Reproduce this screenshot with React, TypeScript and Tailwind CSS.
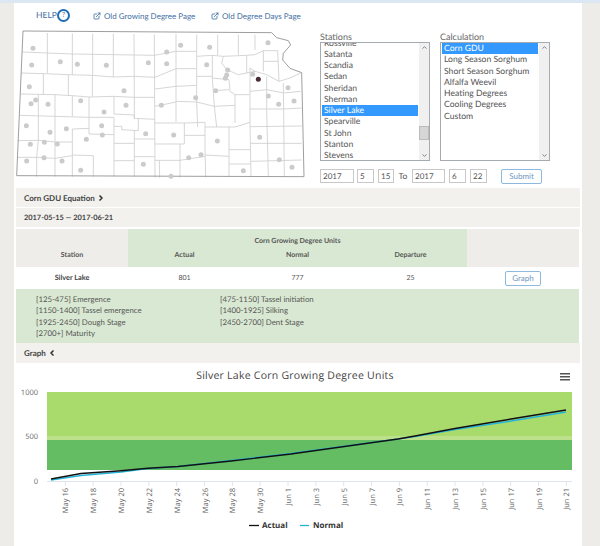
import React from "react";
import { ExternalLink, ChevronRight, ChevronLeft, ChevronUp, ChevronDown } from "lucide-react";

const outline = "M69,93 L815,98 L830,113 L865,122 L872,135 L850,160 L848,180 L870,205 L905,218 L912,530 L50,527 Z";
const lines = [
  "M142,99 L142,219","M217,100 L217,162","M278,101 L278,226","M340,101 L340,231","M402,102 L403,294","M463,103 L465,532",
  "M67,156 L142,159 L217,162 L340,164 L463,166 L528,154 L590,154 L590,169 L637,166 L670,169 L740,166 L765,164 L790,152 L835,152",
  "M65,219 L130,221 L205,224 L277,226 L340,231 L402,229 L465,232 L528,206 L590,206",
  "M130,221 L130,284","M205,224 L205,287","M277,226 L277,289","M217,162 L217,224",
  "M62,282 L165,284 L217,287 L267,291 L340,289 L403,292 L463,292",
  "M115,284 L115,346 L115,421 L110,472 L110,530","M165,284 L165,475 L165,530","M217,287 L217,349","M267,291 L267,402","M342,289 L342,342","M403,292 L403,356",
  "M60,346 L165,349 L267,352 L342,352","M342,342 L403,345 L403,355 L465,358","M342,352 L342,530","M342,379 L365,379 L365,389 L415,392 L415,355",
  "M217,387 L267,385","M217,387 L217,530","M267,402 L342,404","M217,465 L280,467 L280,530",
  "M342,430 L403,430","M403,417 L465,417","M403,392 L403,530","M53,422 L115,421 L165,426 L217,426","M52,472 L110,472 L165,475 L217,467",
  "M342,482 L402,482","M403,470 L465,470",
  "M528,102 L528,366","M590,104 L590,154","M653,104 L653,165","M715,104 L715,165","M765,104 L765,150",
  "M637,166 L637,234 L643,319 L650,381","M670,169 L665,189 L680,209 L715,224 L740,219 L765,214 L800,224 L837,244 L870,234 L902,219",
  "M740,166 L740,219","M790,152 L790,214","M833,154 L837,244","M790,184 L835,184",
  "M590,169 L590,304 L593,381","M590,229 L637,229","M637,234 L687,239 L690,274 L705,284 L748,284","M643,272 L687,269","M705,284 L705,369","M642,319 L705,316",
  "M528,259 L590,256","M528,304 L590,306 L643,319","M465,319 L528,306","M465,267 L528,259",
  "M465,369 L555,369 L615,367","M553,369 L553,432","M615,367 L615,444 L617,532","M615,381 L705,381 L750,367","M687,381 L687,530","M553,406 L615,406","M465,432 L553,432",
  "M540,432 L540,532","M615,465 L687,469","M687,449 L750,449","M687,492 L753,492","M478,481 L479,533","M465,481 L540,481 L615,469",
  "M750,204 L750,367 L753,530","M750,204 L765,214","M800,229 L800,327 L805,530","M850,249 L853,530",
  "M750,274 L800,269 L850,279 L902,274","M750,327 L850,327 L905,324","M750,380 L905,378","M753,430 L905,430","M753,484 L905,480",
];
const dots: [number, number][] = [
  [99,145],[500,156],[542,136],[629,142],[804,128],[95,195],[181,185],[232,193],[319,196],[445,188],[500,191],[620,194],[683,210],[680,225],[676,235],[758,223],
  [88,260],[372,272],[647,272],[864,263],[107,300],[93,311],[144,313],[242,302],[378,316],[484,316],[587,293],[805,288],[836,313],[882,303],
  [312,336],[79,377],[150,397],[199,386],[305,377],[307,405],[437,401],[521,405],[259,418],[652,423],[779,412],
  [91,433],[133,427],[172,432],[80,483],[132,473],[186,483],[242,511],[430,493],[566,473],[603,464],[513,529],[730,512],[838,479],[876,502],
];

function KansasMap() {
  return (
    <svg width={290} height={160} viewBox="45 84 870 480" className="block">
      {lines.map((d, i) => <path key={i} d={d} fill="none" stroke="#cfcfcf" strokeWidth={2.6} />)}
      <path d={outline} fill="none" stroke="#8f8f8f" strokeWidth={2.6} />
      {dots.map(([x, y], i) => <circle key={i} cx={x} cy={y} r={7.5} fill="#cbcbcb" />)}
      <circle cx={775} cy={238} r={7.5} fill="#4b2a3c" />
    </svg>
  );
}

const ScrollBar = ({ thumb }: { thumb: boolean }) => (
  <div className="relative flex w-[10px] flex-col items-center justify-between bg-[#f0f0f0]">
    <ChevronUp size={7} strokeWidth={3} className="text-[#777] mt-[1px]" />
    {thumb && <div className="absolute left-0 top-[83px] h-[14px] w-[10px] border border-[#bbb] bg-[#d6d6d6]" />}
    <ChevronDown size={7} strokeWidth={3} className="text-[#777] mb-[1px]" />
  </div>
);

function ListBox({ items, selected, clip, thumb }: { items: string[]; selected: string; clip?: boolean; thumb: boolean }) {
  return (
    <div className="flex h-[119px] w-[110px] overflow-hidden border border-[#a5abb3] bg-white">
      <div className={clip ? "min-w-0 flex-1 overflow-hidden px-[1px] -mt-[5px]" : "min-w-0 flex-1 overflow-hidden p-[1px] pt-[0.5px]"}>
        {items.map((t) => (
          <div key={t} className={t === selected ? "h-[11.25px] whitespace-nowrap bg-[#3399ff] pl-[2px] text-[8.6px] leading-[11.25px] text-white" : "h-[11.25px] whitespace-nowrap pl-[2px] text-[8.6px] leading-[11.25px] text-[#555]"}>
            {t}
          </div>
        ))}
      </div>
      <ScrollBar thumb={thumb} />
    </div>
  );
}

const DateInput = ({ w, value }: { w: string; value: string }) => (
  <div className={`${w} flex h-[14px] items-center border border-[#c8c8c8] bg-white pl-[2px] text-[8px] text-[#555]`}>{value}</div>
);

function Chart() {
  const ticks = ["May 16","May 18","May 20","May 22","May 24","May 26","May 28","May 30","Jun 1","Jun 3","Jun 5","Jun 7","Jun 9","Jun 11","Jun 13","Jun 15","Jun 17","Jun 19","Jun 21"];
  const actual = "53,479 83,473.5 123,470.7 150,468.3 180,466.5 233,461 293,454 300,453 400,439 417,436 457,428.5 513,419 568,410";
  const normal = "53,480 83,475.5 123,472 150,468.6 180,466.5 233,460.5 293,453.5 300,452.5 400,439 417,436.5 457,429.5 513,421 568,412";
  return (
    <svg width={564} height={183} viewBox="16 363 564 183" className="block" style={{ fontFamily: "'Open Sans', sans-serif" }}>
      <text x={297} y={379} textAnchor="middle" fontSize={10.5} letterSpacing={0.25} fill="#444">Silver Lake Corn Growing Degree Units</text>
      <g fill="#555"><rect x={562} y={373} width={10} height={1.5} /><rect x={562} y={376} width={10} height={1.5} /><rect x={562} y={379} width={10} height={1.5} /></g>
      <rect x={49} y={392} width={525} height={45} fill="#a9da6c" />
      <rect x={49} y={436} width={525} height={4} fill="#bde18a" />
      <rect x={49} y={440} width={525} height={30} fill="#64bc63" />
      <path d="M49,481.5 L574,481.5" stroke="#dfe4ee" strokeWidth={1} />
      <g fontSize={7.5} fill="#666" textAnchor="end">
        <text x={40} y={395}>1000</text><text x={40} y={439}>500</text><text x={40} y={484}>0</text>
      </g>
      {ticks.map((t, i) => {
        const x = 67.3 + i * 27.84;
        return (
          <g key={t}>
            <path d={`M${x},481 L${x},486`} stroke="#dfe4ee" />
            <text transform={`translate(${x + 3},488) rotate(-90)`} textAnchor="end" fontSize={7.5} fill="#666">{t}</text>
          </g>
        );
      })}
      <polyline points={normal} fill="none" stroke="#25b4d8" strokeWidth={1.5} />
      <polyline points={actual} fill="none" stroke="#111" strokeWidth={1.4} />
      <path d="M251,525.5 L261,525.5" stroke="#111" strokeWidth={1.3} />
      <text x={264} y={528} fontSize={8} fontWeight={700} fill="#333">Actual</text>
      <path d="M302,525.5 L311,525.5" stroke="#25b4d8" strokeWidth={1.3} />
      <text x={315} y={528} fontSize={8} fontWeight={700} fill="#333">Normal</text>
    </svg>
  );
}

export default function App() {
  const stations = ["Rossville","Satanta","Scandia","Sedan","Sheridan","Sherman","Silver Lake","Spearville","St John","Stanton","Stevens"];
  const calcs = ["Corn GDU","Long Season Sorghum","Short Season Sorghum","Alfalfa Weevil","Heating Degrees","Cooling Degrees","Custom"];
  return (
    <div className="h-[546px] w-[600px] overflow-hidden bg-[#edece8] font-['Lato',sans-serif] text-[8px] text-[#555] [text-rendering:geometricPrecision]">
      <div className="h-[3px] bg-[#dce7f4]" />
      <div className="flex">
        <div className="w-[14px]" />
        <div className="h-[543px] w-[568px] bg-white">
          <div className="flex h-[185px]">
            <div className="w-[306px] pl-[1px]">
              <div className="flex h-[25px] items-center whitespace-nowrap pl-[21px] text-[#3f6fa3]">
                <span className="w-[20px] text-[8.5px]">HELP</span>
                <span className="ml-[1px] flex h-[13px] w-[13px] items-center justify-center rounded-full border-2 border-[#1f6fb5] text-[7px] leading-none">?</span>
                <ExternalLink size={8} strokeWidth={2.5} className="ml-[23px]" />
                <span className="ml-[3px] w-[89px]">Old Growing Degree Page</span>
                <ExternalLink size={8} strokeWidth={2.5} className="ml-[18px]" />
                <span className="ml-[3px]">Old Degree Days Page</span>
              </div>
              <KansasMap />
            </div>
            <div className="pt-[27.5px]">
              <div className="flex gap-[10px]">
                <div>
                  <div className="h-[11px] text-[9px] leading-[11px] text-[#666]">Stations</div>
                  <ListBox items={stations} selected="Silver Lake" clip thumb />
                </div>
                <div>
                  <div className="h-[11px] text-[9px] leading-[11px] text-[#666]">Calculation</div>
                  <ListBox items={calcs} selected="Corn GDU" thumb={false} />
                </div>
              </div>
              <div className="mt-[8px] flex items-center">
                <DateInput w="w-[34px]" value="2017" />
                <div className="w-[3px]" />
                <DateInput w="w-[17px]" value="5" />
                <div className="w-[4px]" />
                <DateInput w="w-[16px]" value="15" />
                <span className="w-[18px] text-center text-[8.5px]">To</span>
                <DateInput w="w-[33px]" value="2017" />
                <div className="w-[4px]" />
                <DateInput w="w-[17px]" value="6" />
                <div className="w-[4px]" />
                <DateInput w="w-[17px]" value="22" />
                <div className="ml-[14px] flex h-[15px] w-[41px] items-center justify-center rounded-[2px] border border-[#8db9df] text-[#6f97bf]">Submit</div>
              </div>
            </div>
          </div>

          <div className="mx-[2px]">
            <div className="flex h-[19px] items-center gap-[2px] bg-[#f2f1ed] pl-[8px] text-[8px] font-bold text-[#444]">
              Corn GDU Equation <ChevronRight size={8} strokeWidth={5} className="text-[#333]" />
            </div>
            <div className="mt-[1px] flex h-[19px] items-center bg-[#f2f1ed] pl-[8px] text-[7.4px] font-bold text-[#444]">2017-05-15 — 2017-06-21</div>

            <div className="mt-[2px] grid h-[38px] w-[563px] grid-cols-[112px_113px_113px_113px_112px] text-[7px] font-bold leading-[10px] text-[#555]">
              <div className="flex items-end justify-center bg-[#eeede9] pb-[7px]">Station</div>
              <div className="col-span-3 flex flex-col bg-[#d9e8d2]">
                <div className="mt-[7px] text-center">Corn Growing Degree Units</div>
                <div className="mt-[4px] grid grid-cols-3 text-center">
                  <span>Actual</span><span>Normal</span><span>Departure</span>
                </div>
              </div>
              <div className="bg-[#eeede9]" />
            </div>
            <div className="grid h-[22px] w-[563px] grid-cols-[112px_113px_113px_113px_112px] items-center text-center text-[7px]">
              <span className="text-[7.3px] font-bold text-[#444]">Silver Lake</span>
              <span>801</span><span>777</span><span>25</span>
              <div className="flex justify-center">
                <div className="flex h-[15px] w-[36px] items-center justify-center rounded-[2px] border border-[#8db9df] text-[8px] text-[#6f97bf]">Graph</div>
              </div>
            </div>

            <div className="grid h-[54px] w-[563px] grid-cols-[184px_1fr] bg-[#d9e8d2] pl-[20px] pt-[5px] text-[7.8px] leading-[11.3px] text-[#555]">
              <div>
                <div>[125-475] Emergence</div>
                <div>[1150-1400] Tassel emergence</div>
                <div>[1925-2450] Dough Stage</div>
                <div>[2700+] Maturity</div>
              </div>
              <div>
                <div>[475-1150] Tassel initiation</div>
                <div>[1400-1925] Silking</div>
                <div>[2450-2700] Dent Stage</div>
              </div>
            </div>

            <div className="flex h-[20px] items-center gap-[2px] bg-[#f2f1ed] pl-[8px] text-[8px] font-bold text-[#444]">
              Graph <ChevronLeft size={8} strokeWidth={5} className="text-[#333]" />
            </div>
          </div>
          <Chart />
        </div>
      </div>
    </div>
  );
}
